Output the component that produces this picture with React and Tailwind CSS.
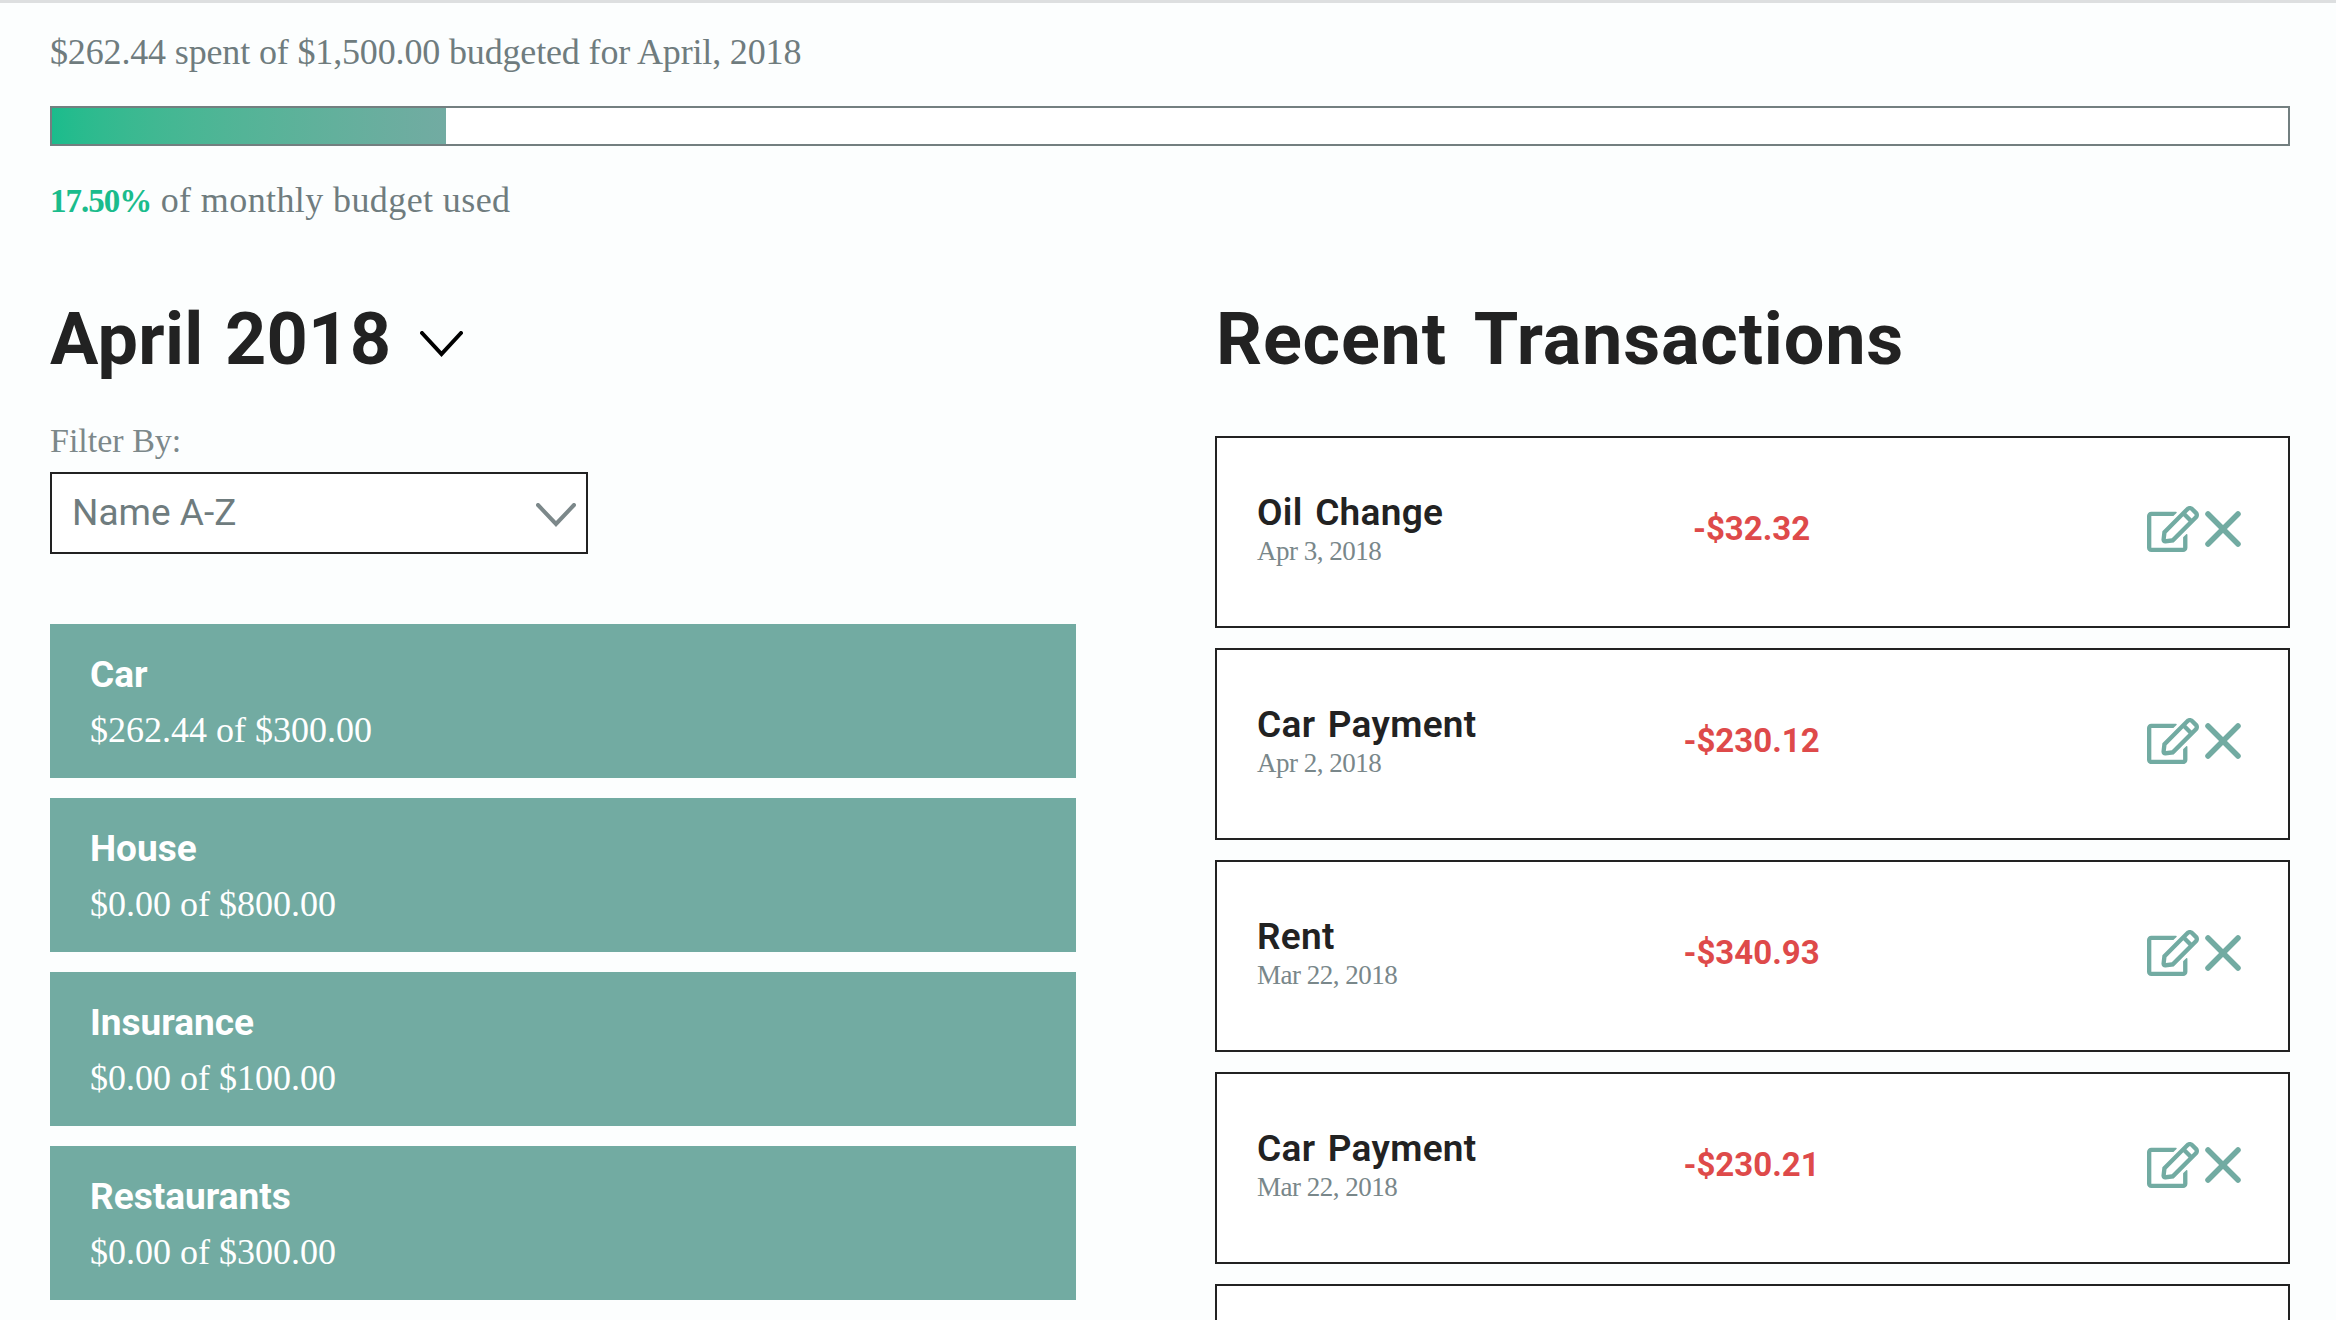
import { FaRegEdit } from 'react-icons/fa'

const BUDGETS = [
  { name: 'Car', spent: '$262.44 of $300.00' },
  { name: 'House', spent: '$0.00 of $800.00' },
  { name: 'Insurance', spent: '$0.00 of $100.00' },
  { name: 'Restaurants', spent: '$0.00 of $300.00' },
]

const TRANSACTIONS = [
  { name: 'Oil Change', date: 'Apr 3, 2018', amount: '-$32.32' },
  { name: 'Car Payment', date: 'Apr 2, 2018', amount: '-$230.12' },
  { name: 'Rent', date: 'Mar 22, 2018', amount: '-$340.93' },
  { name: 'Car Payment', date: 'Mar 22, 2018', amount: '-$230.21' },
]

const SERIF = "font-['Liberation_Serif',serif]"
const SANS = "font-['Roboto',sans-serif]"

function CloseIcon() {
  return (
    <svg width="36" height="36" viewBox="0 0 36 36" fill="none" stroke="currentColor" strokeWidth="5.5" strokeLinecap="round">
      <line x1="3" y1="3" x2="33" y2="33" />
      <line x1="33" y1="3" x2="3" y2="33" />
    </svg>
  )
}

function Chevron({ width, height, className }) {
  return (
    <svg width={width} height={height} viewBox={`0 0 ${width} ${height}`} fill="none" stroke="currentColor" strokeWidth="4" strokeLinecap="round" className={className}>
      <polyline points={`2,2 ${width / 2},${height - 3} ${width - 2},2`} />
    </svg>
  )
}

function Transaction({ item }) {
  return (
    <div className="grid h-[192px] shrink-0 grid-cols-[1fr_auto_1fr] items-center border-2 border-[#222222] bg-white pb-[6px] pl-[40px] pr-[42px]">
      <div>
        <div className={`${SANS} text-[37px] font-semibold leading-[44px] tracking-[0.3px] text-[#222222] [word-spacing:3px]`}>{item.name}</div>
        <div className={`${SERIF} text-[27px] leading-[32px] tracking-[-0.5px] text-[#79878a]`}>{item.date}</div>
      </div>
      <div className={`${SANS} text-[33px] font-bold text-[#de4a4a]`}>{item.amount}</div>
      <div className="mr-[5px] flex items-center justify-end gap-[6px] text-[#72aba2]">
        <FaRegEdit size={52} />
        <CloseIcon />
      </div>
    </div>
  )
}

export default function App() {
  return (
    <div className="h-[1320px] w-[2336px] overflow-hidden border-t-[3px] border-[#dddfe0] bg-[#fcfefe] pl-[50px] pr-[46px] text-[#6f7c7e]">
      {/* Budget summary */}
      <p className={`${SERIF} mt-[25px] text-[36px] leading-[48px] tracking-[-0.15px]`}>$262.44 spent of $1,500.00 budgeted for April, 2018</p>
      <div className="mt-[30px] h-[40px] border-2 border-[#737f80] bg-white">
        <div className="h-full w-[17.6%] bg-gradient-to-r from-[#1abc8c] to-[#72aba2]" />
      </div>
      <p className={`${SERIF} mt-[30px] text-[36px] leading-[48px] tracking-[0.4px]`}>
        <span className="text-[33px] font-bold tracking-[-1px] text-[#1abc8c]">17.50%</span> of monthly budget used
      </p>

      <div className="mt-[65px] flex justify-between">
        {/* Budgets */}
        <div className="w-[1026px]">
          <div className="flex h-[100px] items-center gap-[29px]">
            <h2 className={`${SANS} text-[72px] font-bold leading-none tracking-[0.3px] text-[#222222] [word-spacing:3px]`}>April 2018</h2>
            <Chevron width={43} height={26} className="mt-[8px] text-black" />
          </div>
          <div className={`${SERIF} mt-[29px] text-[34px] leading-[44px] text-[#7c888a]`}>Filter By:</div>
          <div className="mt-[9px] flex h-[82px] w-[538px] items-center justify-between border-2 border-[#222222] bg-white pl-[20px] pr-[10px]">
            <span className={`${SANS} text-[37px]`}>Name A-Z</span>
            <Chevron width={40} height={24} className="mt-[4px] text-[#7c888a]" />
          </div>
          <div className="mt-[70px] flex flex-col gap-[20px]">
            {BUDGETS.map((b) => (
              <div key={b.name} className="flex h-[154px] flex-col justify-center bg-[#72aba2] px-[40px] pt-[2px] text-white">
                <div className={`${SANS} text-[37px] font-bold leading-[50px]`}>{b.name}</div>
                <div className={`${SERIF} mt-[5px] text-[36px] leading-[50px]`}>{b.spent}</div>
              </div>
            ))}
          </div>
        </div>

        {/* Recent transactions */}
        <div className="w-[1075px]">
          <h2 className={`${SANS} flex h-[100px] items-center pl-[1px] text-[72px] font-bold leading-none tracking-[0.8px] text-[#222222] [word-spacing:10px]`}>Recent Transactions</h2>
          <div className="mt-[46px] flex flex-col gap-[20px]">
            {TRANSACTIONS.map((t, i) => (
              <Transaction key={i} item={t} />
            ))}
            {/* next row is cut off by the bottom of the page */}
            <div className="h-[192px] shrink-0 border-2 border-[#222222] bg-white" />
          </div>
        </div>
      </div>
    </div>
  )
}
